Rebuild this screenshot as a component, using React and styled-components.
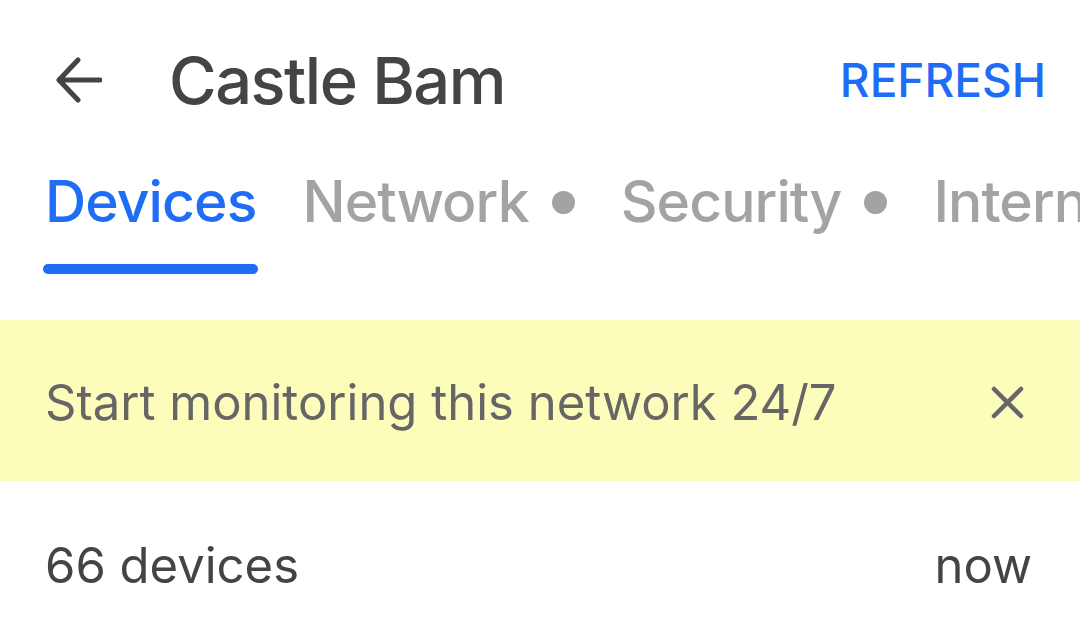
import React from "react"
import styled, { createGlobalStyle } from "styled-components"

const Global = createGlobalStyle`
  html, body {
    margin: 0;
    padding: 0;
    background: #ffffff;
  }
  body {
    font-family: Inter, "Noto Sans", "Liberation Sans", sans-serif;
    overflow: hidden;
  }
`

const Page = styled.div`
  width: 1080px;
  height: 642px;
  overflow: hidden;
  display: flex;
  flex-direction: column;
`

const Header = styled.header`
  display: flex;
  align-items: center;
  height: 160px;
  flex-shrink: 0;
  padding: 0 34px 0 56px;
`

const Back = styled.svg`
  width: 46px;
  height: 46px;
  flex-shrink: 0;
`

const Title = styled.h1`
  margin: 0 0 0 67px;
  flex: 1;
  font-size: 65px;
  font-weight: 500;
  color: #444444;
  letter-spacing: -1.5px;
`

const Refresh = styled.button`
  border: none;
  background: none;
  padding: 0;
  font-family: inherit;
  font-size: 46px;
  font-weight: 500;
  color: #1f6cf5;
`

const Tabs = styled.nav`
  display: flex;
  align-items: flex-start;
  gap: 42px;
  padding-left: 43px;
  height: 160px;
  flex-shrink: 0;
  white-space: nowrap;
`

const Tab = styled.div`
  display: flex;
  flex-direction: column;
  align-items: stretch;
  padding-top: 7px;

  .label {
    display: flex;
    align-items: center;
    gap: 23px;
    padding: 0 2px;
    font-size: 57px;
    font-weight: 500;
    letter-spacing: -0.9px;
    line-height: 70px;
    color: ${(p) => (p.$active ? "#1f6cf5" : "#a3a3a3")};
  }

  .bar {
    margin-top: 27px;
    height: 10px;
    border-radius: 5px;
    background: ${(p) => (p.$active ? "#1f6cf5" : "transparent")};
  }
`

const Dot = styled.span`
  width: 23px;
  height: 23px;
  border-radius: 50%;
  background: #a3a3a3;
`

const Banner = styled.div`
  display: flex;
  align-items: center;
  justify-content: space-between;
  height: 161px;
  flex-shrink: 0;
  padding: 4px 56px 0 45px;
  box-sizing: border-box;
  background: #fdfdbb;
  font-size: 49px;
  color: #666666;
`

const Close = styled.svg`
  width: 33px;
  height: 33px;
`

const Summary = styled.div`
  display: flex;
  align-items: center;
  justify-content: space-between;
  height: 161px;
  padding: 8px 48px 0 45px;
  box-sizing: border-box;
  font-size: 49px;
  color: #444444;
`

const tabs = [
  { name: "Devices", active: true },
  { name: "Network", dot: true },
  { name: "Security", dot: true },
  { name: "Internet" },
]

export default function App() {
  return (
    <Page>
      <Global />
      <Header>
        <Back viewBox="0 0 46 46" fill="none" stroke="#444444" strokeWidth="5" strokeLinecap="round" strokeLinejoin="round">
          <path d="M44 23H3M22 3L3 23l19 20" />
        </Back>
        <Title>Castle Bam</Title>
        <Refresh>REFRESH</Refresh>
      </Header>
      <Tabs>
        {tabs.map((t) => (
          <Tab key={t.name} $active={t.active}>
            <span className="label">
              {t.name}
              {t.dot && <Dot />}
            </span>
            <span className="bar" />
          </Tab>
        ))}
      </Tabs>
      <Banner>
        <span>Start monitoring this network 24/7</span>
        <Close viewBox="0 0 33 33" fill="none" stroke="#666666" strokeWidth="4.5" strokeLinecap="round">
          <path d="M3 3l27 27M30 3L3 30" />
        </Close>
      </Banner>
      <Summary>
        <span>66 devices</span>
        <span>now</span>
      </Summary>
    </Page>
  )
}
